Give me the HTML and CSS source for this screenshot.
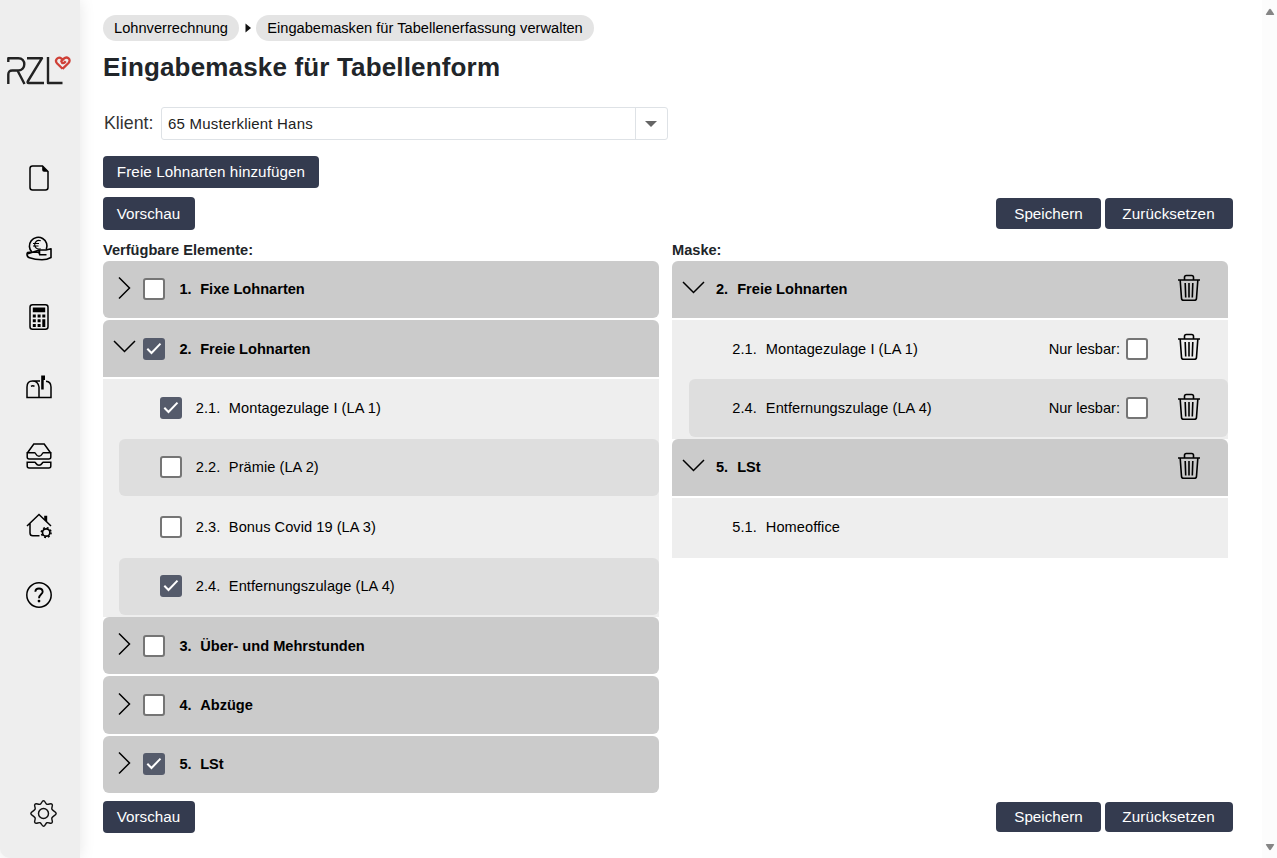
FILE: index.html
```
<!DOCTYPE html>
<html lang="de">
<head>
<meta charset="utf-8">
<title>Eingabemaske für Tabellenform</title>
<link rel="stylesheet" href="styles.css">
</head>
<body>
<svg class="defs" width="0" height="0">
  <symbol id="right" viewBox="0 0 24 24"><path d="M7 1.500 17.500 12 7 22.500" fill="none" stroke="#000" stroke-width="1.500"/></symbol>
  <symbol id="down" viewBox="0 0 24 24"><path d="M2 6 12.500 16.500 23 6" fill="none" stroke="#000" stroke-width="1.500"/></symbol>
  <symbol id="check" viewBox="0 0 22 22"><path d="m4.300 10.700 4.200 4.300 9-9.400" fill="none" stroke="#fff" stroke-width="2"/></symbol>
  <symbol id="trash" viewBox="0 0 24 28"><g fill="none" stroke="#000" stroke-width="1.600"><path d="M1 6h22M7.500 5.500V3.300Q7.500 1.500 9.300 1.500h5.400q1.800 0 1.800 1.800v2.200M3.200 6.500l1.300 17.800q.2 2 2.200 2h10.600q2 0 2.200-2L20.800 6.500"/><path d="m8.200 9 .5 14.500M12 9v14.500M15.800 9l-.5 14.500"/></g></symbol>
</svg>
<div class="app">
  <nav class="sidebar">
    <svg class="logo" viewBox="0 0 64 30"><g fill="none" stroke="#222" stroke-width="2.400" stroke-linejoin="round"><path d="M1.300 7V3.200h10c8 0 8 12.300 0 12.300H5.200Q1.300 15.500 1.300 19.500V29M10.500 15.500 17.500 29M20 3.200h15L21 26q-1.200 2 .8 2H37M41 2v26h14.500"/></g><path d="M55.500 13.800 50.200 8.500C47 5 51.300 .8 54.500 3.700l.5.500M55.500 13.800l6-5.800C64.800 4.500 60 .7 56.800 3.600L54.300 6.300C55 9 57 8.500 58.700 6.300" fill="none" stroke="#cf4037" stroke-width="2.300"/></svg>
    <div class="menu">
      <svg viewBox="0 0 26 26"><path d="M6.500 1h10L22 6.500V22.500Q22 25 19.500 25h-13Q4 25 4 22.500v-19Q4 1 6.500 1Z" fill="none" stroke="#000" stroke-width="1.500"/><path d="M16.200 1 22 6.800h-4q-1.800 0-1.800-1.800Z"/></svg>
      <svg viewBox="0 0 26 26"><g fill="none" stroke="#000" stroke-width="1.600" stroke-linejoin="round"><path d="M6 17.300A8.800 8.800 0 1 1 20.300 14.500"/><path d="M14.800 5.800C10.500 4.500 8.700 7.500 8.700 9.800s2 5.300 6 4M7 8.500h6M7 11h5.500" stroke-width="1.200"/><path d="M1 19q0-2 3-1.800h6M13 19.800h7.500M13.500 15h6.500L25 13.700v8.800q-4 2.300-9 2.300-7 0-12.500-2Q1 22 1 19ZM8 17.300h3.300q2 0 2.200 1.700M13.500 15v4.500"/></g></svg>
      <svg viewBox="0 0 26 26"><rect x="4" y=".8" width="18" height="24.400" rx="2.500" fill="none" stroke="#000" stroke-width="1.500"/><path d="M6.800 3.400h12.400v4.800H6.800ZM6.800 10.600h3v3h-3ZM11.600 10.600h3v3h-3ZM16.300 10.600h3v3h-3ZM6.800 15.300h3v3h-3ZM11.600 15.300h3v3h-3ZM16.300 15.300h3v7.700h-3ZM6.800 20h3v3h-3ZM11.600 20h3v3h-3Z"/></svg>
      <svg viewBox="0 0 26 26"><path d="M13 23.500H1V13q0-6 5.500-6t6.500 6v10.500h12V13q0-5.500-5-5.800M6.500 7H14M5 12.300q1.800-1.200 3.500 0" fill="none" stroke="#000" stroke-width="1.500"/><path d="M15.200 1.500H19v4.500h-1.300v9.500h-2.500Z"/></svg>
      <svg viewBox="0 0 26 26"><path d="M1.500 9.800 7.800 1h10.400l6.300 8.800M1.200 9.800h7.500c1.300 0 1.200 3.500 4.300 3.500s3-3.500 4.300-3.500h7.500V14q0 2-2 2H3.200q-2 0-2-2ZM1.200 19.200h7.500c1.300 0 1.200 3 4.300 3s3-3 4.300-3h7.500V23q0 2-2 2H3.200q-2 0-2-2Z" fill="none" stroke="#000" stroke-width="1.500"/></svg>
      <svg viewBox="0 0 26 26"><g fill="none" stroke="#000" stroke-width="1.500"><path d="M1 13 13 1.500 25 13M4 10.500V20q0 2.800 2.800 2.800H13.500"/><circle cx="20.200" cy="19.500" r="3.700" stroke-width="1.700"/><circle cx="20.200" cy="19.500" r="4.900" stroke-width="1.500" stroke-dasharray="1.900 1.948"/></g><path d="M18.200 2.800h3v6.200l-3-2.800Z"/></svg>
      <svg viewBox="0 0 26 26"><circle cx="13" cy="13" r="12.200" fill="none" stroke="#000" stroke-width="1.500"/><path d="M9.300 9.800Q9.500 6.500 13 6.500t3.700 3.200c0 2.500-3.700 2.700-3.700 6.500" fill="none" stroke="#000" stroke-width="1.800"/><circle cx="13" cy="19.100" r="1.400"/></svg>
    </div>
    <svg class="gear" viewBox="0 0 26 26"><g fill="none" stroke="#111" stroke-width="1.400" stroke-linejoin="round"><path d="M13 .8c1.700 0 1.700 2.700 3.300 3.300 1.600.7 3.600-1.400 4.900-.1s-.8 3.200-.1 4.800 4.100 2.400 4.100 4.200-3.400 2.600-4.100 4.200 1.400 3.500.1 4.800-3.300-.8-4.900-.1-1.600 3.300-3.300 3.300-1.700-2.700-3.300-3.300-3.600 1.400-4.900.1.800-3.200.1-4.800S.8 14.800.8 13s3.400-2.600 4.100-4.200S3.500 5.300 4.800 4s3.300.8 4.900.1C11.300 3.500 11.300.8 13 .8Z"/><circle cx="13" cy="13" r="4.800"/></g></svg>
  </nav>
  <main class="content">
    <div class="crumbs"><span class="chip">Lohnverrechnung</span><svg class="sep" viewBox="0 0 6 10"><path d="M.5 .5 6 5 .5 9.500Z" fill="#111"/></svg><span class="chip chip-long">Eingabemasken für Tabellenerfassung verwalten</span></div>
    <h1 class="title">Eingabemaske für Tabellenform</h1>
    <div class="client"><span class="client-label">Klient:</span><div class="select"><span class="select-text">65 Musterklient Hans</span><span class="arrow"><svg viewBox="0 0 12 6"><path d="M0 0h12L6 6Z" fill="#656565"/></svg></span></div></div>
    <button class="btn add">Freie Lohnarten hinzufügen</button>
    <div class="actions"><button class="btn preview">Vorschau</button><div class="pair"><button class="btn save">Speichern</button><button class="btn reset">Zurücksetzen</button></div></div>
    <div class="columns">
      <section>
        <h2 class="caption">Verfügbare Elemente:</h2>
        <div class="row head"><svg class="chev"><use href="#right"/></svg><i class="box"></i><b class="num">1.</b><b>Fixe Lohnarten</b></div>
        <div class="row head open"><svg class="chev"><use href="#down"/></svg><i class="box on"><svg><use href="#check"/></svg></i><b class="num">2.</b><b>Freie Lohnarten</b></div>
        <div class="group">
          <div class="row sub"><i class="box on"><svg><use href="#check"/></svg></i><span class="num">2.1.</span><span>Montagezulage I (LA 1)</span></div>
          <div class="row sub alt"><i class="box"></i><span class="num">2.2.</span><span>Prämie (LA 2)</span></div>
          <div class="row sub"><i class="box"></i><span class="num">2.3.</span><span>Bonus Covid 19 (LA 3)</span></div>
          <div class="row sub alt"><i class="box on"><svg><use href="#check"/></svg></i><span class="num">2.4.</span><span>Entfernungszulage (LA 4)</span></div>
        </div>
        <div class="row head"><svg class="chev"><use href="#right"/></svg><i class="box"></i><b class="num">3.</b><b>Über- und Mehrstunden</b></div>
        <div class="row head"><svg class="chev"><use href="#right"/></svg><i class="box"></i><b class="num">4.</b><b>Abzüge</b></div>
        <div class="row head"><svg class="chev"><use href="#right"/></svg><i class="box on"><svg><use href="#check"/></svg></i><b class="num">5.</b><b>LSt</b></div>
      </section>
      <section class="mask">
        <h2 class="caption">Maske:</h2>
        <div class="row head open"><svg class="chev"><use href="#down"/></svg><b class="num">2.</b><b>Freie Lohnarten</b><svg class="trash"><use href="#trash"/></svg></div>
        <div class="group">
          <div class="row sub"><span class="num">2.1.</span><span>Montagezulage I (LA 1)</span><span class="readonly">Nur lesbar:</span><i class="box"></i><svg class="trash"><use href="#trash"/></svg></div>
          <div class="row sub alt"><span class="num">2.4.</span><span>Entfernungszulage (LA 4)</span><span class="readonly">Nur lesbar:</span><i class="box"></i><svg class="trash"><use href="#trash"/></svg></div>
        </div>
        <div class="row head open"><svg class="chev"><use href="#down"/></svg><b class="num">5.</b><b>LSt</b><svg class="trash"><use href="#trash"/></svg></div>
        <div class="group"><div class="row sub"><span class="num">5.1.</span><span>Homeoffice</span></div></div>
      </section>
    </div>
    <div class="actions bottom"><button class="btn preview">Vorschau</button><div class="pair"><button class="btn save">Speichern</button><button class="btn reset">Zurücksetzen</button></div></div>
  </main>
  <div class="scroll"><svg viewBox="0 0 10 8"><path d="M1.500 7h7q1 0 .5-1L6 1.500q-1-1.300-2 0L1 6q-.5 1 .5 1Z" fill="#858585"/></svg><svg viewBox="0 0 10 8"><path d="M1.500 1h7q1 0 .5 1L6 6.500q-1 1.300-2 0L1 2Q.5 1 1.500 1Z" fill="#858585"/></svg></div>
</div>
</body>
</html>
```
FILE: styles.css
```
* { box-sizing: border-box; }
body { margin: 0; overflow: hidden; background: #fff; font-family: "Liberation Sans", Arial, sans-serif; font-size: 14.6px; color: #000; }
svg { display: block; flex: none; }
.defs { position: absolute; }
.app { display: grid; grid-template-columns: 80px 1fr 15px; height: 858px; }
.sidebar { display: flex; flex-direction: column; background: #eee; box-shadow: 0 0 16px rgba(0, 0, 0, .1); border-bottom-left-radius: 10px; padding-top: 55px; }
.logo { width: 64px; height: 30px; margin-left: 7px; }
.menu { display: flex; flex-direction: column; align-items: center; gap: 43.500px; margin-top: 80px; padding-right: 2px; }
.menu svg { width: 26px; height: 26px; }
.gear { width: 27px; height: 27px; margin: auto 0 31px 30px; }
.content { padding: 15px 29px 0 23px; }
.crumbs { display: flex; align-items: center; height: 26px; }
.chip { width: 136px; height: 26px; line-height: 26px; border-radius: 13px; background: #e4e4e4; text-align: center; white-space: nowrap; font-size: 14.650px; }
.chip-long { width: 338px; }
.sep { width: 6px; height: 10px; margin: 0 5px 0 6px; }
.title { height: 66px; margin: 0; padding-top: 10px; font-size: 26px; line-height: 32px; letter-spacing: .16px; color: #212529; white-space: nowrap; }
.client { display: flex; align-items: center; height: 33px; }
.client-label { width: 58px; padding-left: 1px; font-size: 17.800px; color: #333; }
.select { display: flex; align-items: center; justify-content: space-between; width: 507px; height: 33px; border: 1px solid #dee2e6; border-radius: 3px; padding-left: 6px; color: #222; font-size: 15px; }
.select-text { letter-spacing: .2px; }
.arrow { display: flex; align-items: center; justify-content: center; width: 32px; height: 31px; border-left: 1px solid #dee2e6; padding-right: 1px; }
.arrow svg { width: 12px; height: 6px; }
.btn { display: block; height: 32px; padding: 0; border: 0; border-radius: 4px; background: #343b4f; color: #fff; font: 15.200px "Liberation Sans", Arial, sans-serif; text-align: center; white-space: nowrap; }
.add { width: 216px; margin-top: 16px; padding-bottom: 1px; letter-spacing: .1px; }
.preview { width: 92px; padding-right: 1px; }
.save { width: 105px; }
.reset { width: 128px; padding-right: 1px; letter-spacing: .1px; }
.actions { display: flex; align-items: center; justify-content: space-between; height: 33px; margin-top: 9px; }
.actions .preview { height: 33px; }
.pair { display: flex; gap: 4px; }
.pair .btn { height: 31px; }
.columns { display: grid; grid-template-columns: 556px 556px; gap: 13px; }
.caption { height: 30.600px; margin: 0; padding-top: 11px; font-size: 14.600px; line-height: 18px; color: #212529; }
.row { display: flex; align-items: center; height: 57.400px; margin-bottom: 2px; white-space: nowrap; }
.row span { letter-spacing: .05px; }
.head { padding-left: 9px; border-radius: 6px; background: #cbcbcb; }
.open { border-radius: 6px 6px 0 0; }
.group { overflow: hidden; background: #eee; }
.sub { margin-left: 16px; padding-left: 41px; }
.alt { border-radius: 6px; background: #dedede; }
.chev { width: 24px; height: 24px; margin: 0 7px 3px 0; }
.box { flex: none; width: 22px; height: 22px; border: 2px solid #757575; border-radius: 3px; background: #fff; }
.on { border: 0; background: #555b6b; }
.on svg { width: 22px; height: 22px; }
.num { margin-right: 8.500px; }
.box + .num { margin-left: 14.500px; }
.sub .box + .num { margin-left: 13.800px; }
.mask .chev { margin-right: 11px; }
.mask .num { margin-right: 9px; }
.mask .sub { margin-left: 17px; padding-left: 43.300px; }
.mask .alt, .mask .sub { padding-right: 0; }
.row .readonly { margin: 0 6px 0 auto; letter-spacing: 0; }
.trash { width: 24px; height: 28px; margin: 0 27.500px 3px auto; }
.box + .trash { margin-left: 28.500px; }
.bottom { height: 32px; margin-top: 5.600px; }
.bottom .preview { height: 32px; }
.bottom .btn { padding-bottom: 1px; }
.bottom .pair .btn { height: 30px; }
.scroll { display: flex; flex-direction: column; justify-content: space-between; align-items: center; background: #fcfcfc; padding: 8px 0 7px; }
.scroll svg { width: 10px; height: 8px; }
```
